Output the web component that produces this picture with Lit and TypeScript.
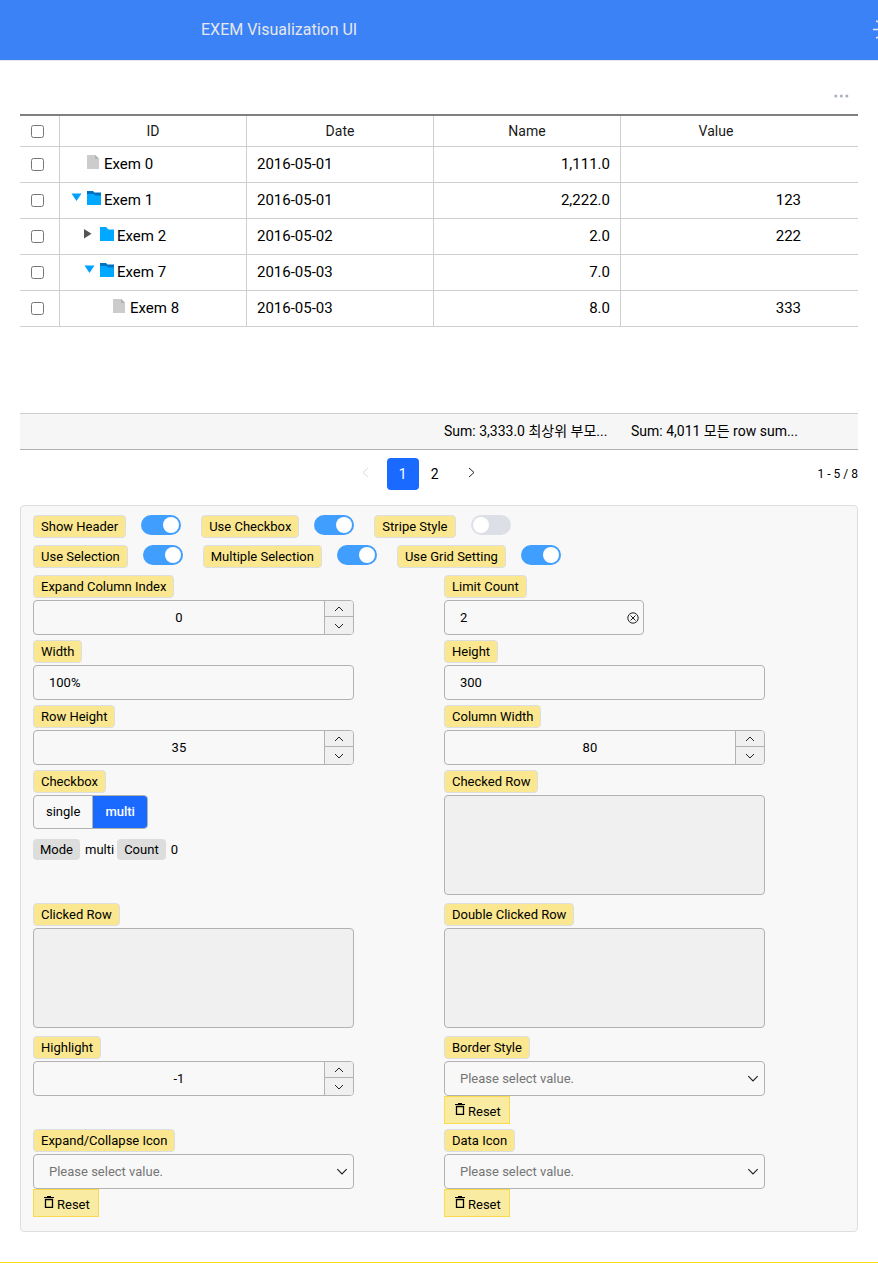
import { LitElement, html, css, svg, nothing } from "lit";
import { customElement, state } from "lit/decorators.js";
import { classMap } from "lit/directives/class-map.js";

type Kind = "file" | "open" | "closed";

interface Row {
  id: string;
  level: number;
  kind: Kind;
  date: string;
  name: string;
  value: string;
}

const ROWS: Row[] = [
  { id: "Exem 0", level: 0, kind: "file", date: "2016-05-01", name: "1,111.0", value: "" },
  { id: "Exem 1", level: 0, kind: "open", date: "2016-05-01", name: "2,222.0", value: "123" },
  { id: "Exem 2", level: 1, kind: "closed", date: "2016-05-02", name: "2.0", value: "222" },
  { id: "Exem 7", level: 1, kind: "open", date: "2016-05-03", name: "7.0", value: "" },
  { id: "Exem 8", level: 2, kind: "file", date: "2016-05-03", name: "8.0", value: "333" },
];

const SWITCHES = [
  [
    { id: "header", label: "Show Header", on: true },
    { id: "checkbox", label: "Use Checkbox", on: true },
    { id: "stripe", label: "Stripe Style", on: false },
  ],
  [
    { id: "selection", label: "Use Selection", on: true },
    { id: "multiple", label: "Multiple Selection", on: true },
    { id: "setting", label: "Use Grid Setting", on: true },
  ],
];

const chevron = (d: string) => html`<svg class="chevron" viewBox="0 0 10 6" aria-hidden="true"><path d=${d} /></svg>`;
const UP = "M1 5 5 1l4 4";
const DOWN = "M1 1l4 4 4-4";

@customElement("tree-grid")
class TreeGrid extends LitElement {
  static styles = css`
    :host { display: block; }
    * { box-sizing: border-box; }
    .toolbar { display: flex; justify-content: flex-end; height: 53px; padding: 26px 9px 0 0; }
    .more { display: flex; width: 15px; height: 18px; padding: 0; border: 0; background: none; align-items: center; }
    .more svg { width: 15px; height: 4px; fill: #a9b1ba; }
    .grid { min-height: 299px; border-top: 2px solid #808080; }
    table { width: 100%; border-collapse: separate; border-spacing: 0; table-layout: fixed; }
    .c-check { width: 40px; }
    .c-data { width: 187px; }
    .c-last { width: 190px; }
    th, td { padding: 0 10px; border-bottom: 1px solid #cfcfcf; white-space: nowrap; }
    th { height: 31px; font-size: 14px; line-height: 30px; font-weight: 400; color: #1a1a1a; }
    td { height: 36px; font-size: 15px; line-height: 35px; color: #000; }
    .line { border-right: 1px solid #cfcfcf; }
    .check { padding: 0 4px 0 0; }
    .check input { display: block; width: 13px; height: 13px; margin: 0 auto; }
    .num { text-align: right; }
    .tree { display: flex; align-items: center; }
    .indent { width: 13px; flex: none; }
    .arrow { width: 17px; height: 14px; flex: none; padding: 0; border: 0; background: none; display: flex; margin-bottom: 4px; }
    .arrow svg { width: 12px; height: 12px; }
    .icon { width: 17px; height: 15px; flex: none; margin-bottom: 7px; }
    .summary { display: grid; grid-template-columns: 40px 187px 187px 187px 190px; height: 37px; background: #f6f6f6; border-top: 1px solid #cfcfcf; border-bottom: 1px solid #b0b0b0; font-size: 14px; line-height: 35px; }
    .summary span { padding: 0 10px; white-space: nowrap; }
    .pager { display: flex; align-items: center; height: 47px; margin-bottom: 8px; }
    .pages { flex: 1; display: flex; align-items: center; justify-content: center; }
    .pages button { width: 32px; height: 32px; padding: 0; border: 0; border-radius: 4px; background: none; color: #000; font: inherit; font-size: 14px; }
    .pages .current { background: #1a6aff; color: #fff; }
    .pages svg { display: block; width: 7px; height: 11px; margin: 0 auto 3px; fill: none; stroke: #222; stroke-width: 1; }
    .pages .next { margin-left: 5px; }
    .pages .prev { margin-right: 5px; }
    .pages .prev svg { stroke: #dcdcdc; }
    .range { font-size: 12px; line-height: 16px; }
  `;

  private arrow(kind: Kind) {
    if (kind === "file") return html`<span class="arrow"></span>`;
    const shape = kind === "open"
      ? svg`<path d="M1.500 1.500h10L6.500 9z" fill="#00a0ff" />`
      : svg`<path d="M1 1v9.500l7.500-4.750z" fill="#555" />`;
    return html`<button class="arrow" aria-label="toggle row"><svg viewBox="0 0 12 12">${shape}</svg></button>`;
  }

  private icon(kind: Kind) {
    if (kind === "file") {
      return html`<svg class="icon" viewBox="0 0 17 15" aria-hidden="true"><path d="M0 1h8.500l3.500 3.500V15H0z" fill="#ccc" /><path d="M8 1l4 4H8z" fill="#b3b3b3" /></svg>`;
    }
    return html`<svg class="icon" viewBox="0 0 17 15" aria-hidden="true">
      ${kind === "open"
        ? svg`<path d="M0 1h6l1.500 1.500H14V7H0z" fill="#0070c0" /><path d="M0 4h6.500l2 1.500H14V15H0z" fill="#00a8ff" />`
        : svg`<path d="M0 1h6l2.500 2.500H14V15H0z" fill="#00a8ff" />`}
    </svg>`;
  }

  render() {
    return html`
      <div class="toolbar">
        <button class="more" aria-label="grid menu"><svg viewBox="0 0 15 4"><circle cx="1.800" cy="2" r="1.500" /><circle cx="7.300" cy="2" r="1.500" /><circle cx="12.900" cy="2" r="1.500" /></svg></button>
      </div>
      <div class="grid">
        <table>
          <colgroup><col class="c-check" /><col class="c-data" /><col class="c-data" /><col class="c-data" /><col class="c-last" /><col /></colgroup>
          <thead>
            <tr>
              <th class="line check"><input type="checkbox" aria-label="all rows" /></th>
              <th class="line">ID</th><th class="line">Date</th><th class="line">Name</th><th>Value</th><th></th>
            </tr>
          </thead>
          <tbody>
            ${ROWS.map((r) => html`<tr>
              <td class="line check"><input type="checkbox" aria-label=${r.id} /></td>
              <td class="line"><div class="tree">
                ${Array.from({ length: r.level }, () => html`<span class="indent"></span>`)}
                ${this.arrow(r.kind)}${this.icon(r.kind)}<span>${r.id}</span>
              </div></td>
              <td class="line">${r.date}</td>
              <td class="line num">${r.name}</td>
              <td class="num">${r.value || nothing}</td>
              <td></td>
            </tr>`)}
          </tbody>
        </table>
      </div>
      <div class="summary">
        <span></span><span></span><span></span>
        <span>Sum: 3,333.0 최상위 부모...</span>
        <span>Sum: 4,011 모든 row sum...</span>
      </div>
      <div class="pager">
        <nav class="pages" aria-label="pages">
          <button class="prev" aria-label="previous"><svg viewBox="0 0 7 11"><path d="M6 1 1 5.500 6 10" /></svg></button>
          <button class="current">1</button>
          <button>2</button>
          <button class="next" aria-label="next"><svg viewBox="0 0 7 11"><path d="M1 1l5 4.500L1 10" /></svg></button>
        </nav>
        <span class="range">1 - 5 / 8</span>
      </div>
    `;
  }
}

@customElement("option-panel")
class OptionPanel extends LitElement {
  @state() private mode = "multi";

  static styles = css`
    :host { display: block; border: 1px solid #dcdfe2; border-radius: 4px; background: #f8f8f8; padding: 9px 12px 14px; font-size: 13px; color: #000; }
    * { box-sizing: border-box; }
    input, textarea, select, button { font: inherit; color: inherit; }
    .switches { display: flex; gap: 20px; margin-bottom: 7px; }
    .switch { display: flex; gap: 15px; align-items: flex-start; }
    .tag { display: block; width: max-content; height: 23px; padding: 0 7px; border: 1px solid #dcdfe2; border-radius: 4px; background: #fae78f; line-height: 21px; white-space: nowrap; }
    .toggle { appearance: none; display: flex; align-items: center; width: 40px; height: 20px; margin: 0; padding: 0 2px; border-radius: 10px; background: #dcdfe6; }
    .toggle::before { content: ""; width: 16px; height: 16px; border-radius: 50%; background: #fff; }
    .toggle:checked { justify-content: flex-end; background: #409eff; }
    .fields { display: grid; grid-template-columns: 1fr 1fr; gap: 5px 10px; }
    .tag + .box, .tag + .area, .tag + .group { margin-top: 2px; }
    .box { display: flex; width: 80%; height: 35px; border: 1px solid #b2b2b2; border-radius: 4px; overflow: hidden; align-items: stretch; }
    .box input { flex: 1; min-width: 0; border: 0; background: none; padding: 0 15px; outline: 0; }
    .stepper input { text-align: center; }
    .short { width: 200px; }
    .steps { width: 29px; display: grid; grid-template-rows: 15px 18px; border-left: 1px solid #b2b2b2; background: #f0f0f0; }
    .steps button, .clear { display: flex; align-items: center; justify-content: center; padding: 0; border: 0; background: none; }
    .steps button + button { border-top: 1px solid #b2b2b2; }
    .chevron { width: 10px; height: 6px; fill: none; stroke: #222; stroke-width: 1; }
    .clear { width: 20px; }
    .clear svg { width: 12px; height: 12px; fill: none; stroke: #222; stroke-width: 1; }
    .area { display: block; width: 80%; height: 100px; margin: 0 0 3px; border: 1px solid #b2b2b2; border-radius: 4px; background: #f0f0f0; resize: none; }
    .select { display: grid; align-items: center; }
    .select select { grid-area: 1 / 1; appearance: none; width: 100%; height: 33px; padding: 0 15px; border: 0; background: none; color: #757575; }
    .select .chevron { grid-area: 1 / 1; justify-self: end; width: 12px; height: 7px; margin-right: 5px; pointer-events: none; }
    .group { display: flex; width: max-content; height: 34px; border: 1px solid #b2b2b2; border-radius: 4px; overflow: hidden; }
    .group label { padding: 0 12px; line-height: 31px; }
    .group label + label { border-left: 1px solid #b2b2b2; }
    .group .active { background: #1a6aff; color: #fff; font-weight: 500; }
    .group input { appearance: none; position: absolute; margin: 0; }
    .status { display: flex; align-items: center; gap: 5px; margin-top: 10px; line-height: 21px; }
    .chip { height: 21px; padding: 0 7px; border-radius: 4px; background: #ddd; }
    .status .chip + span { margin-right: -2px; }
    .reset { display: flex; align-items: center; gap: 3px; height: 28px; padding: 2px 8px 0 10px; border: 1px solid #fadb4d; background: #faeba3; }
    .reset svg { width: 10px; height: 12px; margin-bottom: 4px; fill: none; stroke: #000; }
  `;

  private stepper(id: string, label: string, value: string) {
    return html`<div>
      <label class="tag" for=${id}>${label}</label>
      <div class="box stepper">
        <input id=${id} type="text" inputmode="numeric" .value=${value} />
        <div class="steps"><button aria-label="increase">${chevron(UP)}</button><button aria-label="decrease">${chevron(DOWN)}</button></div>
      </div>
    </div>`;
  }

  private text(id: string, label: string, value: string) {
    return html`<div>
      <label class="tag" for=${id}>${label}</label>
      <div class="box"><input id=${id} type="text" .value=${value} /></div>
    </div>`;
  }

  private area(id: string, label: string) {
    return html`<div>
      <label class="tag" for=${id}>${label}</label>
      <textarea class="area" id=${id} readonly></textarea>
    </div>`;
  }

  private select(id: string, label: string) {
    return html`<div>
      <label class="tag" for=${id}>${label}</label>
      <div class="box select">
        <select id=${id}><option>Please select value.</option></select>
        ${chevron(DOWN)}
      </div>
      <button class="reset"><svg viewBox="0 0 10 12" aria-hidden="true"><path d="M0 1.500h10M3 .5h4" /><path d="M1.500 3.500h7v8h-7z" stroke-width="1.300" /></svg>Reset</button>
    </div>`;
  }

  render() {
    return html`
      ${SWITCHES.map((line) => html`<div class="switches">
        ${line.map((s) => html`<div class="switch">
          <label class="tag" for=${s.id}>${s.label}</label>
          <input class="toggle" id=${s.id} type="checkbox" role="switch" ?checked=${s.on} />
        </div>`)}
      </div>`)}
      <div class="fields">
        ${this.stepper("expand", "Expand Column Index", "0")}
        <div>
          <label class="tag" for="limit">Limit Count</label>
          <div class="box short">
            <input id="limit" type="text" value="2" />
            <button class="clear" aria-label="clear"><svg viewBox="0 0 12 12"><circle cx="6" cy="6" r="5.200" /><path d="M3.500 3.500l5 5M8.500 3.500l-5 5" /></svg></button>
          </div>
        </div>
        ${this.text("width", "Width", "100%")}
        ${this.text("height", "Height", "300")}
        ${this.stepper("row-height", "Row Height", "35")}
        ${this.stepper("col-width", "Column Width", "80")}
        <div>
          <span class="tag" id="mode-label">Checkbox</span>
          <div class="group" role="radiogroup" aria-labelledby="mode-label">
            ${["single", "multi"].map((m) => html`<label class=${classMap({ active: this.mode === m })}><input type="radio" name="mode" .checked=${this.mode === m} @change=${() => (this.mode = m)} />${m}</label>`)}
          </div>
          <div class="status"><span class="chip">Mode</span><span>${this.mode}</span><span class="chip">Count</span><span>0</span></div>
        </div>
        ${this.area("checked", "Checked Row")}
        ${this.area("clicked", "Clicked Row")}
        ${this.area("dbl-clicked", "Double Clicked Row")}
        ${this.stepper("highlight", "Highlight", "-1")}
        ${this.select("border", "Border Style")}
        ${this.select("expand-icon", "Expand/Collapse Icon")}
        ${this.select("data-icon", "Data Icon")}
      </div>
    `;
  }
}

@customElement("app-root")
class AppRoot extends LitElement {
  static styles = css`
    :host { display: block; overflow: hidden; background: #fff; color: #000; font-family: Roboto, "Noto Sans CJK KR", sans-serif; }
    .top { display: flex; align-items: center; justify-content: space-between; height: 60px; padding-left: 201px; border-bottom: 1px solid #e8e8e8; background: #3b82f6; color: #e5e7eb; }
    h1 { margin: 0; font-size: 16px; line-height: 24px; font-weight: 400; }
    .theme { display: flex; margin-right: -18px; padding: 0; border: 0; background: none; color: inherit; }
    .theme svg { width: 24px; height: 24px; fill: none; stroke: currentColor; stroke-width: 1.500; }
    main { padding: 0 20px 30px; border-bottom: 1px solid #fadb14; }
  `;

  render() {
    return html`
      <header class="top">
        <h1>EXEM Visualization UI</h1>
        <button class="theme" aria-label="theme"><svg viewBox="0 0 24 24"><circle cx="12" cy="11.500" r="5" /><path d="M12 .5v3M12 19.500v3M1 11.500h5M18 11.500h5M4.300 2.600l1.500 1.500M18.200 18.900l1.500 1.500M4.300 20.400l1.500-1.500M18.200 4.100l1.500-1.500" /></svg></button>
      </header>
      <main>
        <tree-grid></tree-grid>
        <option-panel></option-panel>
      </main>
    `;
  }
}
